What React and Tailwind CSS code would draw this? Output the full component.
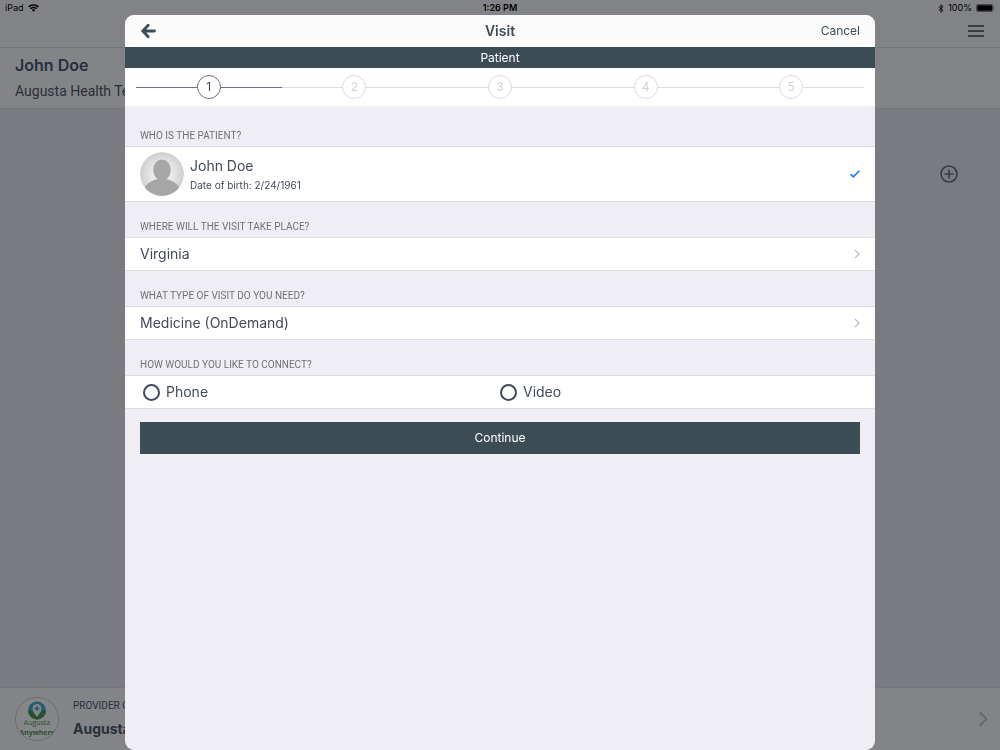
import { useState } from 'react';

const steps = [1, 2, 3, 4, 5];

function WifiIcon() {
    return (
        <svg viewBox="0 0 20 14" className="w-[11px] h-2" fill="#000">
            <path d="M10 0C6.200 0 2.700 1.500 0.200 3.900l1.900 2C4.200 4 7 2.800 10 2.800S15.800 4 17.900 5.900l1.900-2C17.300 1.500 13.800 0 10 0z" />
            <path d="M10 4.700c-2.500 0-4.800 1-6.500 2.600l1.900 2C6.600 8.100 8.200 7.400 10 7.400s3.400.7 4.600 1.900l1.900-2C14.800 5.700 12.500 4.700 10 4.700z" />
            <path d="M10 9.300c-1.300 0-2.400.5-3.200 1.300L10 14l3.200-3.400c-.8-.8-1.900-1.300-3.200-1.300z" />
        </svg>
    );
}

function BluetoothIcon() {
    return (
        <svg viewBox="0 0 12 20" className="w-[6px] h-[9px]" fill="none" stroke="#000" strokeWidth="2">
            <path d="M1 5.500l9.500 8.500L6 18.500v-17L10.500 6 1 14.500" />
        </svg>
    );
}

function BatteryIcon() {
    return (
        <svg viewBox="0 0 19 8" className="w-[19px] h-2">
            <rect x="0.500" y="0.500" width="16.500" height="7" rx="1.800" fill="none" stroke="#45464a" />
            <rect x="1.200" y="1.200" width="15.100" height="5.600" rx="1" fill="#000" />
            <path d="M17.800 2.700c.9.300.9 2.300 0 2.600z" fill="#45464a" />
        </svg>
    );
}

function Chevron({ className }) {
    return (
        <svg viewBox="0 0 10 16" className={className} fill="none" stroke="currentColor" strokeWidth="2">
            <path d="M1.500 1l7 7-7 7" />
        </svg>
    );
}

function Avatar() {
    return (
        <svg viewBox="0 0 44 44" className="w-11 h-11 shrink-0">
            <defs>
                <radialGradient id="avatarBg">
                    <stop offset="0.400" stopColor="#ececec" />
                    <stop offset="1" stopColor="#cfcfcf" />
                </radialGradient>
                <clipPath id="avatarClip">
                    <circle cx="22" cy="22" r="22" />
                </clipPath>
            </defs>
            <g clipPath="url(#avatarClip)">
                <circle cx="22" cy="22" r="22" fill="url(#avatarBg)" />
                <ellipse cx="22" cy="18" rx="8.800" ry="10.500" fill="#a6a6a6" />
                <path d="M17.500 24h9v3c5.500 1.200 10 4 12.500 8v9H5v-9c2.500-4 7-6.800 12.500-8z" fill="#a6a6a6" />
            </g>
        </svg>
    );
}

function Logo() {
    return (
        <svg viewBox="0 0 44 44" className="w-11 h-11 shrink-0" fontFamily="'Open Sans', sans-serif" textAnchor="middle">
            <defs>
                <clipPath id="logoClip">
                    <circle cx="22" cy="22" r="21" />
                </clipPath>
                <clipPath id="markClip">
                    <circle cx="22" cy="13.500" r="9" />
                </clipPath>
            </defs>
            <circle cx="22" cy="22" r="21.500" fill="#858689" stroke="#6c6d71" />
            <g clipPath="url(#markClip)">
                <rect x="13" y="4" width="18" height="19" fill="#245b70" />
                <path d="M12 15l4-2 6 7 6-7 4 2v9H12z" fill="#2b4f2b" />
            </g>
            <path d="M22 20c-2.500-3.600-4.500-5.500-4.500-8.500a4.500 4.500 0 019 0c0 3-2 4.900-4.500 8.500z" fill="#858689" />
            <path d="M22 9v5M19.500 11.500h5" stroke="#245b70" strokeWidth="1.500" />
            <g clipPath="url(#logoClip)">
                <text x="22" y="28" fontSize="7" fill="#2b4f2b">Augusta</text>
                <text x="22" y="38" fontSize="7" fontWeight="700" fill="#2b4f2b">Anywhere</text>
            </g>
        </svg>
    );
}

function Home() {
    return (
        <div className="flex flex-col min-h-screen bg-[#7a7b80] text-[#262f3a]">
            <div className="bg-[#828387] border-b border-[#747579]">
                <div className="flex items-center justify-between h-4 px-[5px] text-[9px] text-black">
                    <div className="flex flex-1 items-center gap-1">
                        <span>iPad</span>
                        <WifiIcon />
                    </div>
                    <span className="font-semibold">1:26 PM</span>
                    <div className="flex flex-1 items-center justify-end gap-1">
                        <BluetoothIcon />
                        <span>100%</span>
                        <BatteryIcon />
                    </div>
                </div>
                <div className="flex items-center justify-end h-[31px] px-4 pb-[2px]">
                    <button aria-label="Menu" className="flex flex-col gap-[3px]">
                        <span className="w-4 h-[2px] bg-[#3d3e41]" />
                        <span className="w-4 h-[2px] bg-[#3d3e41]" />
                        <span className="w-4 h-[2px] bg-[#3d3e41]" />
                    </button>
                </div>
            </div>
            <div className="flex flex-col gap-1 px-[15px] py-[6px] bg-[#838488] border-b border-[#747579]">
                <h1 className="text-base leading-[22px] font-semibold">John Doe</h1>
                <p className="font-['Roboto','Liberation_Sans',sans-serif] text-sm leading-[22px]">Augusta Health Telehealth</p>
            </div>
            <div className="flex-1">
                <div className="flex justify-end px-[42px] pt-14">
                    <button aria-label="Add">
                        <svg viewBox="0 0 18 18" className="w-[18px] h-[18px]" fill="none" stroke="#3b3c40" strokeWidth="1.600">
                            <circle cx="9" cy="9" r="8" />
                            <path d="M9 4.500v9M4.500 9h9" />
                        </svg>
                    </button>
                </div>
            </div>
            <div className="flex items-center gap-[14px] pl-[15px] pr-3 py-[9px] bg-[#838488] border-t border-[#747579]">
                <Logo />
                <div className="flex-1">
                    <p className="font-['Roboto','Liberation_Sans',sans-serif] text-[10px] leading-4">PROVIDER ON CALL</p>
                    <p className="mt-[3px] text-sm leading-6 font-bold">Augusta Anywhere</p>
                </div>
                <Chevron className="w-[10px] h-4 text-[#66676b]" />
            </div>
        </div>
    );
}

function Section({ title, children }) {
    return (
        <section>
            <h3 className="px-[15px] pt-[18px] pb-[3px] font-['Roboto','Liberation_Sans',sans-serif] text-[10px] leading-[14px] text-[#707178]">{title}</h3>
            <div className="bg-white border-y border-[#dddde1]">{children}</div>
        </section>
    );
}

function LinkRow({ text }) {
    return (
        <button className="flex items-center justify-between w-full h-8 px-[15px] text-sm">
            <span>{text}</span>
            <Chevron className="w-[6px] h-[10px] text-[#b8b8be]" />
        </button>
    );
}

function App() {
    const [connect, setConnect] = useState('');
    const handleConnect = (event) => {
        setConnect(event.target.value);
    };

    return (
        <div className="font-['Inter','Liberation_Sans',sans-serif]">
            <Home />
            <div className="fixed top-[15px] bottom-0 inset-x-0 flex justify-center">
                <div role="dialog" aria-label="Visit" className="flex flex-col w-3/4 rounded-[9px] overflow-hidden bg-[#efeef4] text-[#414b5a]">
                    <div className="flex items-center justify-between h-8 px-[15px] bg-[#fbfbfb] text-[#3c4c54]">
                        <div className="flex flex-1">
                            <button aria-label="Back">
                                <svg viewBox="0 0 16 16" className="w-4 h-4" fill="none" stroke="currentColor" strokeWidth="2.800" strokeLinecap="round" strokeLinejoin="miter">
                                    <path d="M8.200 2.300L2.800 8l5.400 5.700M3.500 8h11" />
                                </svg>
                            </button>
                        </div>
                        <h2 className="text-sm font-semibold">Visit</h2>
                        <div className="flex flex-1 justify-end">
                            <button className="text-xs">Cancel</button>
                        </div>
                    </div>
                    <div className="h-[21px] bg-[#3c4c54] text-center text-xs leading-[21px] text-white">Patient</div>
                    <ol className="flex px-[11px] py-[7px] bg-white">
                        {steps.map((step) => (
                            <li key={step} className="flex flex-1 items-center">
                                <span className={step === 1 ? 'flex-1 h-px bg-[#6b7380]' : 'flex-1 h-px bg-[#dcdcde]'} />
                                <span className={step === 1
                                    ? 'flex items-center justify-center w-6 h-6 rounded-full border border-[#6b7380] text-xs'
                                    : 'flex items-center justify-center w-6 h-6 rounded-full border border-[#dcdcde] text-xs text-[#d2d2d5]'}
                                >
                                    {step}
                                </span>
                                <span className={step === 1 ? 'flex-1 h-px bg-[#6b7380]' : 'flex-1 h-px bg-[#dcdcde]'} />
                            </li>
                        ))}
                    </ol>

                    <div className="pt-[5px]">
                        <Section title="WHO IS THE PATIENT?">
                            <button className="flex items-center w-full gap-[6px] px-[15px] py-[5px] text-left">
                                <Avatar />
                                <span className="flex flex-col flex-1 pt-[2px]">
                                    <span className="text-sm leading-5">John Doe</span>
                                    <span className="text-[10px] leading-[18px]">Date of birth: 2/24/1961</span>
                                </span>
                                <svg viewBox="0 0 10 8" className="w-[10px] h-2" fill="none" stroke="#147efb" strokeWidth="1.600">
                                    <path d="M0.600 4.200l2.700 2.600L9.400 0.800" />
                                </svg>
                            </button>
                        </Section>
                        <Section title="WHERE WILL THE VISIT TAKE PLACE?">
                            <LinkRow text="Virginia" />
                        </Section>
                        <Section title="WHAT TYPE OF VISIT DO YOU NEED?">
                            <LinkRow text="Medicine (OnDemand)" />
                        </Section>
                        <Section title="HOW WOULD YOU LIKE TO CONNECT?">
                            <div className="grid grid-cols-2 items-center h-8 px-[18px] text-sm">
                                {['Phone', 'Video'].map((item) => (
                                    <label key={item} className="flex items-center gap-[6px]">
                                        <input type="radio" name="connect" value={item} checked={connect === item} onChange={handleConnect}
                                            className="appearance-none w-[17px] h-[17px] rounded-full border-2 border-[#414b5a] checked:bg-[#414b5a]"
                                        />
                                        {item}
                                    </label>
                                ))}
                            </div>
                        </Section>
                    </div>
                    <div className="px-[15px] pt-[13px]">
                        <button className="w-full h-8 bg-[#3c4c54] text-xs text-white">Continue</button>
                    </div>
                </div>
            </div>
        </div>
    );
}

export default App;
